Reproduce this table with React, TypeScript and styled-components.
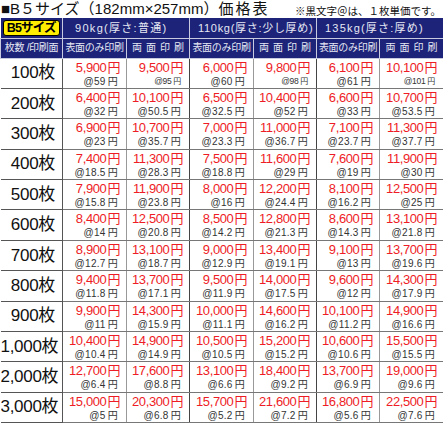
import { Fragment } from "react";
import styled, { createGlobalStyle } from "styled-components";

const GlobalStyle = createGlobalStyle`
  html, body {
    margin: 0;
    padding: 0;
    background: #ffffff;
  }
  body {
    font-family: "Liberation Sans", "Noto Sans CJK JP", sans-serif;
  }
`;

interface Price {
  price: string;
  unit: string;
  small?: boolean;
}

interface Row {
  label: string;
  cells: Price[];
}

interface Group {
  title: string;
  indent: number;
  spacing: number;
}

const rows: Row[] = [
  { label: "100枚", cells: [
    { price: "5,900", unit: "@59" }, { price: "9,500", unit: "@95", small: true },
    { price: "6,000", unit: "@60" }, { price: "9,800", unit: "@98", small: true },
    { price: "6,100", unit: "@61" }, { price: "10,100", unit: "@101", small: true },
  ] },
  { label: "200枚", cells: [
    { price: "6,400", unit: "@32" }, { price: "10,100", unit: "@50.5" },
    { price: "6,500", unit: "@32.5" }, { price: "10,400", unit: "@52" },
    { price: "6,600", unit: "@33" }, { price: "10,700", unit: "@53.5" },
  ] },
  { label: "300枚", cells: [
    { price: "6,900", unit: "@23" }, { price: "10,700", unit: "@35.7" },
    { price: "7,000", unit: "@23.3" }, { price: "11,000", unit: "@36.7" },
    { price: "7,100", unit: "@23.7" }, { price: "11,300", unit: "@37.7" },
  ] },
  { label: "400枚", cells: [
    { price: "7,400", unit: "@18.5" }, { price: "11,300", unit: "@28.3" },
    { price: "7,500", unit: "@18.8" }, { price: "11,600", unit: "@29" },
    { price: "7,600", unit: "@19" }, { price: "11,900", unit: "@30" },
  ] },
  { label: "500枚", cells: [
    { price: "7,900", unit: "@15.8" }, { price: "11,900", unit: "@23.8" },
    { price: "8,000", unit: "@16" }, { price: "12,200", unit: "@24.4" },
    { price: "8,100", unit: "@16.2" }, { price: "12,500", unit: "@25" },
  ] },
  { label: "600枚", cells: [
    { price: "8,400", unit: "@14" }, { price: "12,500", unit: "@20.8" },
    { price: "8,500", unit: "@14.2" }, { price: "12,800", unit: "@21.3" },
    { price: "8,600", unit: "@14.3" }, { price: "13,100", unit: "@21.8" },
  ] },
  { label: "700枚", cells: [
    { price: "8,900", unit: "@12.7" }, { price: "13,100", unit: "@18.7" },
    { price: "9,000", unit: "@12.9" }, { price: "13,400", unit: "@19.1" },
    { price: "9,100", unit: "@13" }, { price: "13,700", unit: "@19.6" },
  ] },
  { label: "800枚", cells: [
    { price: "9,400", unit: "@11.8" }, { price: "13,700", unit: "@17.1" },
    { price: "9,500", unit: "@11.9" }, { price: "14,000", unit: "@17.5" },
    { price: "9,600", unit: "@12" }, { price: "14,300", unit: "@17.9" },
  ] },
  { label: "900枚", cells: [
    { price: "9,900", unit: "@11" }, { price: "14,300", unit: "@15.9" },
    { price: "10,000", unit: "@11.1" }, { price: "14,600", unit: "@16.2" },
    { price: "10,100", unit: "@11.2" }, { price: "14,900", unit: "@16.6" },
  ] },
  { label: "1,000枚", cells: [
    { price: "10,400", unit: "@10.4" }, { price: "14,900", unit: "@14.9" },
    { price: "10,500", unit: "@10.5" }, { price: "15,200", unit: "@15.2" },
    { price: "10,600", unit: "@10.6" }, { price: "15,500", unit: "@15.5" },
  ] },
  { label: "2,000枚", cells: [
    { price: "12,700", unit: "@6.4" }, { price: "17,600", unit: "@8.8" },
    { price: "13,100", unit: "@6.6" }, { price: "18,400", unit: "@9.2" },
    { price: "13,700", unit: "@6.9" }, { price: "19,000", unit: "@9.6" },
  ] },
  { label: "3,000枚", cells: [
    { price: "15,000", unit: "@5" }, { price: "20,300", unit: "@6.8" },
    { price: "15,700", unit: "@5.2" }, { price: "21,600", unit: "@7.2" },
    { price: "16,800", unit: "@5.6" }, { price: "22,500", unit: "@7.6" },
  ] },
];

const groups: Group[] = [
  { title: "90kg(厚さ:普通)", indent: 12, spacing: 1.3 },
  { title: "110kg(厚さ:少し厚め)", indent: 8, spacing: 0.7 },
  { title: "135kg(厚さ:厚め)", indent: 8, spacing: 1.2 },
];

function App() {
  return (
    <>
      <GlobalStyle />
      <Page>
        <TitleBar>
          <Title>■B５サイズ（182mm×257mm）<Wide>価格表</Wide></Title>
          <Note>※黒文字＠は、１枚単価です。</Note>
        </TitleBar>
        <Table>
          <colgroup>
            <col style={{ width: 62 }} />
            <col style={{ width: 64 }} />
            <col style={{ width: 63 }} />
            <col style={{ width: 64 }} />
            <col style={{ width: 63 }} />
            <col style={{ width: 63 }} />
            <col style={{ width: 64 }} />
          </colgroup>
          <thead>
            <HeadRow>
              <HeadCell>
                <SizeBadge>B5サイズ</SizeBadge>
              </HeadCell>
              {groups.map((g) => (
                <GroupCell key={g.title} colSpan={2} $indent={g.indent} $spacing={g.spacing}>
                  {g.title}
                </GroupCell>
              ))}
            </HeadRow>
            <HeadRow>
              <SubCell>枚数 /印刷面</SubCell>
              {groups.map((g) => (
                <Fragment key={g.title}>
                  <SubCell>表面のみ印刷</SubCell>
                  <SubCell $spaced>両面印刷</SubCell>
                </Fragment>
              ))}
            </HeadRow>
          </thead>
          <tbody>
            {rows.map((r) => (
              <DataRow key={r.label}>
                <LabelCell>{r.label}</LabelCell>
                {r.cells.map((c, i) => (
                  <PriceCell key={i} $groupEnd={i % 2 === 1}>
                    <PriceText>{c.price}<Yen>円</Yen></PriceText>
                    <UnitText $small={c.small}>
                      {c.unit}
                      <UnitYen $small={c.small}>円</UnitYen>
                    </UnitText>
                  </PriceCell>
                ))}
              </DataRow>
            ))}
          </tbody>
        </Table>
      </Page>
    </>
  );
}

export default App;

const Page = styled.div`
  width: 443px;
  height: 423px;
  overflow: hidden;
  background: #ffffff;
`;

const TitleBar = styled.div`
  height: 18px;
  display: flex;
  align-items: flex-start;
  justify-content: space-between;
  overflow: hidden;
`;

const Title = styled.div`
  font-size: 15px;
  line-height: 16px;
  height: 16px;
  margin-top: 1px;
  color: #111;
  padding-left: 1px;
  white-space: nowrap;
`;

const Wide = styled.span`
  letter-spacing: 2px;
`;

const Note = styled.div`
  font-size: 10.5px;
  line-height: 11px;
  height: 11px;
  margin-top: 6px;
  color: #111;
  white-space: nowrap;
  padding-right: 2px;
`;

const Table = styled.table`
  width: 443px;
  table-layout: fixed;
  border-collapse: collapse;
  font-family: "Liberation Sans", "Noto Sans CJK JP", sans-serif;
`;

const HeadRow = styled.tr`
  height: 20px;
  background: #1c2378;
`;

const HeadCell = styled.th`
  padding: 0;
  border: 1px solid #c8cbe0;
  border-top: none;
  border-left: none;
  text-align: center;
  vertical-align: middle;
  line-height: 0;
`;

const SizeBadge = styled.div`
  display: inline-block;
  box-sizing: border-box;
  width: 57px;
  height: 16px;
  line-height: 14px;
  background: #ffee00;
  border: 1px solid #000;
  border-radius: 3px;
  color: #000;
  font-size: 12.5px;
  font-weight: bold;
  letter-spacing: -0.8px;
  white-space: nowrap;
  overflow: hidden;
`;

const GroupCell = styled.th<{ $indent: number; $spacing: number }>`
  padding: 0 0 0 ${(p) => p.$indent}px;
  line-height: 16px;
  border: 1px solid #c8cbe0;
  border-top: none;
  color: #e6e8f4;
  font-size: 11px;
  font-weight: normal;
  text-align: left;
  letter-spacing: ${(p) => p.$spacing}px;
  white-space: nowrap;
  overflow: hidden;
`;

const SubCell = styled.th<{ $spaced?: boolean }>`
  padding: 0;
  line-height: 16px;
  border: 1px solid #c8cbe0;
  color: #e6e8f4;
  font-size: 10px;
  font-weight: normal;
  text-align: center;
  letter-spacing: ${(p) => (p.$spaced ? "4px" : "-0.3px")};
  text-indent: ${(p) => (p.$spaced ? "4px" : "0")};
  white-space: nowrap;
  overflow: hidden;
`;

const DataRow = styled.tr`
  height: 30.4px;
`;

const LabelCell = styled.td`
  padding: 0 7px 0 0;
  line-height: 20px;
  border: 1px solid #555;
  border-left: none;
  text-align: right;
  font-size: 17px;
  color: #111;
  white-space: nowrap;
  letter-spacing: -0.3px;
  overflow: hidden;
`;

const PriceCell = styled.td<{ $groupEnd?: boolean }>`
  padding: 0;
  border-top: 1px solid #777;
  border-bottom: 1px solid #777;
  border-right: 1px solid ${(p) => (p.$groupEnd ? "#444" : "#999")};
  text-align: right;
  vertical-align: top;
  white-space: nowrap;
  overflow: hidden;
`;

const PriceText = styled.div`
  height: 14px;
  margin-top: 2px;
  color: #ee1c25;
  font-size: 13px;
  line-height: 14px;
  padding-right: 6px;
  letter-spacing: -0.4px;
  overflow: hidden;
`;

const Yen = styled.span`
  margin-left: 1px;
  vertical-align: top;
`;

const UnitText = styled.div<{ $small?: boolean }>`
  height: 11px;
  margin-top: 1px;
  color: #333;
  font-size: ${(p) => (p.$small ? "8.5px" : "10px")};
  line-height: 11px;
  padding-right: 8px;
  letter-spacing: ${(p) => (p.$small ? "-0.3px" : "0.3px")};
  overflow: hidden;
`;

const UnitYen = styled.span<{ $small?: boolean }>`
  margin-left: 2px;
  vertical-align: top;
  font-size: ${(p) => (p.$small ? "8px" : "10px")};
`;
